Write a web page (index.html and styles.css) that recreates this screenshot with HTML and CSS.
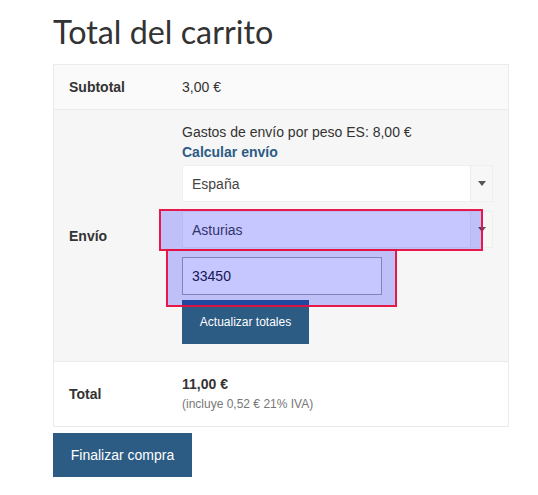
FILE: index.html
```html
<!DOCTYPE html>
<html lang="es">
<head>
<meta charset="utf-8">
<title>Total del carrito</title>
<link rel="stylesheet" href="styles.css">
</head>
<body>
<div class="cart">
  <h2 class="cart-title">Total del carrito</h2>
  <table class="totals">
    <tr class="row-subtotal">
      <th>Subtotal</th>
      <td>3,00 €</td>
    </tr>
    <tr class="row-shipping">
      <th>Envío</th>
      <td>
        <div class="ship-method">Gastos de envío por peso ES: 8,00 €</div>
        <div class="ship-calc">Calcular envío</div>
        <div class="ship-form">
          <div class="select">
            <span class="select-field">España</span>
            <span class="select-arrow"><span class="caret"></span></span>
          </div>
          <div class="select">
            <span class="select-field">Asturias</span>
            <span class="select-arrow"><span class="caret"></span></span>
          </div>
          <div class="postcode">33450</div>
          <button class="btn btn-update">Actualizar totales</button>
        </div>
      </td>
    </tr>
    <tr class="row-total">
      <th>Total</th>
      <td>
        <div class="total-amount">11,00 €</div>
        <div class="total-tax">(incluye 0,52 € 21% IVA)</div>
      </td>
    </tr>
  </table>
  <button class="btn btn-checkout">Finalizar compra</button>
</div>
<div class="highlight hl-state"></div>
<div class="highlight hl-postcode"></div>
</body>
</html>
```

FILE: styles.css
```css
html, body {
  margin: 0;
  padding: 0;
  background: #ffffff;
}

body {
  font-family: "Liberation Sans", Arial, sans-serif;
  font-size: 14px;
  line-height: 20px;
  color: #333333;
}

.cart {
  width: 456px;
  margin-left: 53px;
  padding-top: 12px;
}

.cart-title {
  margin: 0 0 12px 0;
  font-family: Lato, sans-serif;
  font-weight: 400;
  font-size: 32.3px;
  line-height: 40px;
  color: #333333;
}

.totals {
  width: 456px;
  border-collapse: collapse;
  border: 1px solid #ebebeb;
}

.totals th,
.totals td {
  padding: 12px 15px;
  text-align: left;
  vertical-align: middle;
  border-top: 1px solid #ebebeb;
}

.totals th {
  width: 98px;
  font-weight: 700;
  color: #333333;
}

.totals td {
  padding-left: 12px;
  color: #333333;
}

.row-subtotal th,
.row-subtotal td {
  background: #fafafa;
}

.row-shipping th,
.row-shipping td {
  background: #f6f6f6;
}

.row-shipping td {
  padding-bottom: 17px;
}

.row-total th,
.row-total td {
  background: #ffffff;
}

.ship-calc {
  font-weight: 700;
  color: #2b5b86;
}

.ship-form {
  display: flex;
  flex-direction: column;
  align-items: flex-start;
  gap: 9px;
  margin-top: 3px;
}

.select {
  display: flex;
  width: 311px;
  height: 37px;
  box-sizing: border-box;
  border: 1px solid #efefef;
}

.select-field {
  flex: 1;
  display: flex;
  align-items: center;
  padding-left: 9px;
  background: #ffffff;
  border-right: 1px solid #ececec;
  color: #444444;
}

.select-arrow {
  width: 21px;
  display: flex;
  align-items: center;
  justify-content: center;
  background: #f7f7f7;
}

.caret {
  width: 0;
  height: 0;
  border-left: 4px solid transparent;
  border-right: 4px solid transparent;
  border-top: 5px solid #555555;
}

.postcode {
  width: 200px;
  height: 38px;
  box-sizing: border-box;
  border: 1px solid #a9a9a9;
  background: #ffffff;
  padding-left: 9px;
  display: flex;
  align-items: center;
  color: #222222;
}

.btn {
  border: 0;
  background: #2c5b84;
  color: #ffffff;
  font-family: "Liberation Sans", Arial, sans-serif;
  cursor: pointer;
}

.btn-update {
  margin-top: -4px;
  width: 127px;
  height: 44px;
  font-size: 12px;
  padding: 0;
}

.total-amount {
  font-weight: 700;
  color: #333333;
}

.total-tax {
  font-size: 12px;
  line-height: 20px;
  color: #777777;
}

.btn-checkout {
  margin-top: 6px;
  width: 139px;
  height: 44px;
  font-size: 14px;
  padding: 0;
}

.highlight {
  position: absolute;
  box-sizing: border-box;
  border: 2px solid rgba(232, 16, 62, 0.95);
  background: rgba(0, 0, 255, 0.22);
}

.hl-state {
  left: 159px;
  top: 209px;
  width: 324px;
  height: 42px;
}

.hl-postcode {
  left: 166px;
  top: 249px;
  width: 231px;
  height: 58px;
}
```
